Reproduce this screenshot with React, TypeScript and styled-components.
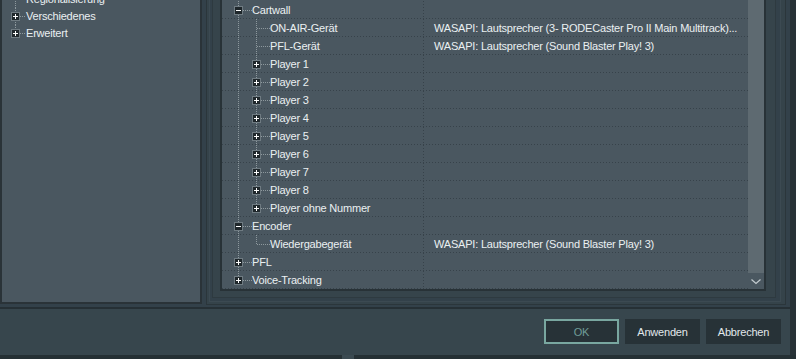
import React from "react";
import styled, { createGlobalStyle } from "styled-components";

const GlobalStyle = createGlobalStyle`
  html, body {
    margin: 0;
    padding: 0;
    background: #36454c;
  }
  body {
    font-family: "Liberation Sans", Arial, sans-serif;
    font-size: 11px;
    letter-spacing: -0.2px;
    color: #eaf0f2;
    overflow: hidden;
  }
`;

const Window = styled.div`
  width: 796px;
  height: 359px;
  display: flex;
  flex-direction: column;
  overflow: hidden;
`;

const Body = styled.div`
  display: flex;
  height: 355px;
`;

const Main = styled.div`
  width: 790px;
  display: flex;
  flex-direction: column;
`;

const RightEdge = styled.div`
  width: 6px;
  background: #283237;
`;

const Content = styled.div`
  height: 307px;
  display: flex;
  align-items: flex-start;
  gap: 4px;
  background: #33414a;
`;

const Divider = styled.div`
  height: 2px;
  background: #263035;
`;

const ButtonBar = styled.div`
  flex: 1;
  display: flex;
  justify-content: flex-end;
  align-items: flex-start;
  gap: 6px;
  padding: 10px 9px 0 0;
  background: #37464d;
`;

const BottomStrip = styled.div`
  height: 4px;
  padding-left: 342px;
  background: #253034;
`;

const StripMark = styled.div`
  width: 12px;
  height: 4px;
  background: #3b4a51;
`;

const Button = styled.button<{ $default?: boolean }>`
  width: 75px;
  height: 25px;
  box-sizing: border-box;
  border: 2px solid ${({ $default }) => ($default ? "#79a7a0" : "#273237")};
  background: #273237;
  color: ${({ $default }) => ($default ? "#6f9d97" : "#e2e8eb")};
  font-family: inherit;
  font-size: 11px;
  letter-spacing: -0.2px;
  padding: 0;
  cursor: default;
`;

/* left navigation */
const LeftPanel = styled.div`
  width: 202px;
  height: 304px;
  box-sizing: border-box;
  border: 2px solid #2a3338;
  border-top: none;
  background: #4a5760;
  overflow: hidden;
`;

const NavList = styled.div`
  margin-top: -9px;
`;

const NavRow = styled.div`
  height: 17px;
  display: flex;
  align-items: center;
  padding-left: 5px;
`;

/* right frame + tree */
const Bevel = styled.div<{ $line: string; $fill: string; $pad: string }>`
  flex: 1;
  display: flex;
  flex-direction: column;
  border: 1px solid ${({ $line }) => $line};
  border-top: none;
  background: ${({ $fill }) => $fill};
  padding: ${({ $pad }) => $pad};
`;

const Frame = styled.div`
  width: 580px;
  height: 305px;
  display: flex;
  flex-direction: column;
`;

const TreePanel = styled.div`
  flex: 1;
  display: flex;
  border: 2px solid #283237;
  border-top: none;
  background: #4a5760;
  overflow: hidden;
`;

const Rows = styled.div`
  flex: 1;
  padding-top: 1px;
  min-width: 0;
`;

const Row = styled.div`
  height: 18px;
  display: grid;
  grid-template-columns: 201px 1fr;
  background-image: repeating-linear-gradient(
    to right,
    #37424a 0 1px,
    transparent 1px 3px
  );
  background-size: 100% 1px;
  background-position: left bottom;
  background-repeat: no-repeat;
`;

const NameCell = styled.div`
  display: flex;
  align-items: center;
  padding-left: 8px;
  overflow: hidden;
  white-space: nowrap;
`;

const ValueCell = styled.div`
  display: flex;
  align-items: center;
  padding: 0 4px 1px 11px;
  overflow: hidden;
  white-space: nowrap;
  background-image: repeating-linear-gradient(
    to bottom,
    #37424a 0 1px,
    transparent 1px 3px
  );
  background-size: 1px 100%;
  background-repeat: no-repeat;
`;

const Label = styled.span`
  padding-bottom: 1px;
`;

const Scrollbar = styled.div`
  width: 16px;
  display: flex;
  flex-direction: column;
`;

const Thumb = styled.div`
  flex: 1;
  background: #5e6a71;
`;

const ArrowButton = styled.div`
  height: 16px;
  display: flex;
`;

type GuideKind = "pass" | "blank" | "tee" | "end";
type Expander = "plus" | "minus";

const Guide = ({
  kind,
  exp,
  w,
  h,
}: {
  kind: GuideKind;
  exp?: Expander;
  w: number;
  h: number;
}) => {
  const cx = 8.5;
  const cy = Math.floor(h / 2) + 0.5;
  const line = "#8d989d";
  const own = kind === "tee" || kind === "end";
  return (
    <svg width={w} height={h} style={{ flex: "none", display: "block" }}>
      {kind !== "blank" && (
        <line
          x1={cx}
          y1={0}
          x2={cx}
          y2={kind === "end" ? cy : h}
          stroke={line}
          strokeDasharray="1 1"
        />
      )}
      {own && (
        <line
          x1={exp ? 13 : 9}
          y1={cy}
          x2={w}
          y2={cy}
          stroke={line}
          strokeDasharray="1 1"
        />
      )}
      {exp && (
        <g>
          <rect x={4.5} y={cy - 4} width={8} height={8} fill="#1f272b" stroke="#6f7b82" />
          <line x1={6} y1={cy} x2={11} y2={cy} stroke="#ffffff" />
          {exp === "plus" && <line x1={cx} y1={cy - 2.5} x2={cx} y2={cy + 2.5} stroke="#ffffff" />}
        </g>
      )}
    </svg>
  );
};

const Chevron = () => (
  <svg width={16} height={16}>
    <polyline
      points="3.5,6.5 8,10.5 12.5,6.5"
      fill="none"
      stroke="#c3cbcf"
      strokeWidth={1.2}
    />
  </svg>
);

type Node = {
  label: string;
  value?: string;
  pass?: GuideKind[];
  own: GuideKind;
  exp?: Expander;
};

const lautsprecher = "WASAPI: Lautsprecher (Sound Blaster Play! 3)";

const tree: Node[] = [
  { label: "Cartwall", own: "tee", exp: "minus" },
  {
    label: "ON-AIR-Gerät",
    pass: ["pass"],
    own: "tee",
    value: "WASAPI: Lautsprecher (3- RODECaster Pro II Main Multitrack)...",
  },
  { label: "PFL-Gerät", pass: ["pass"], own: "tee", value: lautsprecher },
  ...Array.from({ length: 8 }, (_, i) => ({
    label: `Player ${i + 1}`,
    pass: ["pass"] as GuideKind[],
    own: "tee" as GuideKind,
    exp: "plus" as Expander,
  })),
  { label: "Player ohne Nummer", pass: ["pass"], own: "end", exp: "plus" },
  { label: "Encoder", own: "tee", exp: "minus" },
  { label: "Wiedergabegerät", pass: ["pass"], own: "end", value: lautsprecher },
  { label: "PFL", own: "tee", exp: "plus" },
  { label: "Voice-Tracking", own: "end", exp: "plus" },
];

const nav: Node[] = [
  { label: "Regionalisierung", own: "tee" },
  { label: "Verschiedenes", own: "tee", exp: "plus" },
  { label: "Erweitert", own: "end", exp: "plus" },
];

export default function App() {
  return (
    <Window>
      <GlobalStyle />
      <Body>
        <Main>
          <Content>
            <LeftPanel>
              <NavList>
                {nav.map((n) => (
                  <NavRow key={n.label}>
                    <Guide kind={n.own} exp={n.exp} w={19} h={17} />
                    <Label>{n.label}</Label>
                  </NavRow>
                ))}
              </NavList>
            </LeftPanel>
            <Frame>
              <Bevel $line="#2b363b" $fill="#35434a" $pad="0 4px 2px 2px">
                <Bevel $line="#3c4a52" $fill="#33414a" $pad="0 4px 3px 2px">
                  <Bevel $line="#2e3a40" $fill="#36444b" $pad="0 9px 6px 7px">
                    <TreePanel>
                      <Rows>
                        {tree.map((n) => (
                          <Row key={n.label}>
                            <NameCell>
                              {(n.pass ?? []).map((p, i) => (
                                <Guide key={i} kind={p} w={18} h={18} />
                              ))}
                              <Guide kind={n.own} exp={n.exp} w={22} h={18} />
                              <Label>{n.label}</Label>
                            </NameCell>
                            <ValueCell>{n.value}</ValueCell>
                          </Row>
                        ))}
                      </Rows>
                      <Scrollbar>
                        <Thumb />
                        <ArrowButton>
                          <Chevron />
                        </ArrowButton>
                      </Scrollbar>
                    </TreePanel>
                  </Bevel>
                </Bevel>
              </Bevel>
            </Frame>
          </Content>
          <Divider />
          <ButtonBar>
            <Button $default>OK</Button>
            <Button>Anwenden</Button>
            <Button>Abbrechen</Button>
          </ButtonBar>
        </Main>
        <RightEdge />
      </Body>
      <BottomStrip>
        <StripMark />
      </BottomStrip>
    </Window>
  );
}
